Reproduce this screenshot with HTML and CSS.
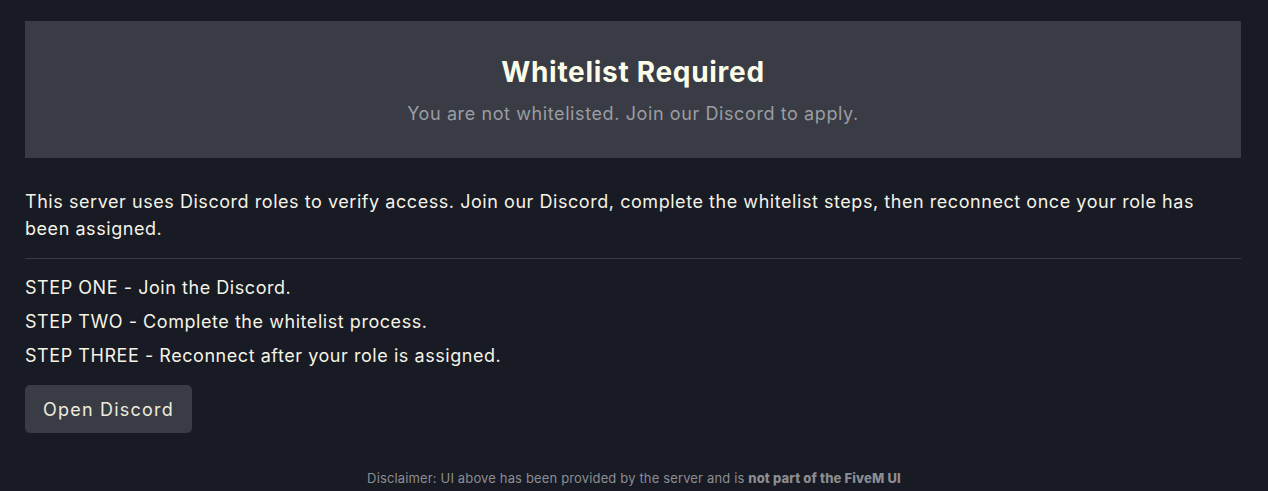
FILE: index.html
```html
<!DOCTYPE html>
<html lang="en">
<head>
<meta charset="utf-8">
<title>Whitelist Required</title>
<link rel="stylesheet" href="styles.css">
</head>
<body>
<main class="page">
  <header class="banner">
    <h1 class="banner-title">Whitelist Required</h1>
    <p class="banner-sub">You are not whitelisted. Join our Discord to apply.</p>
  </header>
  <section class="content">
    <p class="intro">This server uses Discord roles to verify access. Join our Discord, complete the whitelist steps, then reconnect once your role has been assigned.</p>
    <hr class="divider">
    <ul class="steps">
      <li>STEP ONE - Join the Discord.</li>
      <li>STEP TWO - Complete the whitelist process.</li>
      <li>STEP THREE - Reconnect after your role is assigned.</li>
    </ul>
    <button class="btn" type="button">Open Discord</button>
  </section>
</main>
<footer class="disclaimer">Disclaimer: UI above has been provided by the server and is <b>not part of the FiveM UI</b></footer>
</body>
</html>
```
FILE: styles.css
```css
html, body {
  margin: 0;
  padding: 0;
  background: #181a24;
  height: 100%;
}
body {
  font-family: "Inter", "Noto Sans", sans-serif;
  color: #f4f3e6;
  display: flex;
  flex-direction: column;
}
.page {
  flex: 1;
  padding: 21px 27px 0 25px;
}
.banner {
  background: #393c44;
  height: 137px;
  box-sizing: border-box;
  padding-top: 35px;
  text-align: center;
}
.banner-title {
  margin: 0;
  font-size: 28px;
  line-height: 32px;
  font-weight: 700;
  letter-spacing: 0.7px;
  color: #fbfbe9;
}
.banner-sub {
  margin: 15px 0 0;
  font-size: 18px;
  line-height: 22px;
  letter-spacing: 0.6px;
  color: #9b9da3;
}
.content {
  padding-top: 30px;
}
.intro {
  margin: 0;
  padding-right: 30px;
  font-size: 18px;
  line-height: 27px;
  letter-spacing: 0.55px;
}
.divider {
  border: 0;
  border-top: 1px solid #393b44;
  margin: 16px 0 12px;
}
.steps {
  list-style: none;
  margin: 0;
  padding: 0;
  font-size: 18px;
  line-height: 34px;
  letter-spacing: 0.55px;
}
.btn {
  margin-top: 12px;
  width: 167px;
  height: 48px;
  border: 0;
  border-radius: 5px;
  background: #393c44;
  color: #ecebdf;
  font-family: "Inter", sans-serif;
  font-size: 18px;
  letter-spacing: 1.2px;
  padding: 0;
}
.disclaimer {
  text-align: center;
  font-size: 13px;
  letter-spacing: 0.15px;
  color: #8c8d92;
  padding-bottom: 5px;
  line-height: 16px;
}
.disclaimer b {
  font-weight: 800;
}
```
